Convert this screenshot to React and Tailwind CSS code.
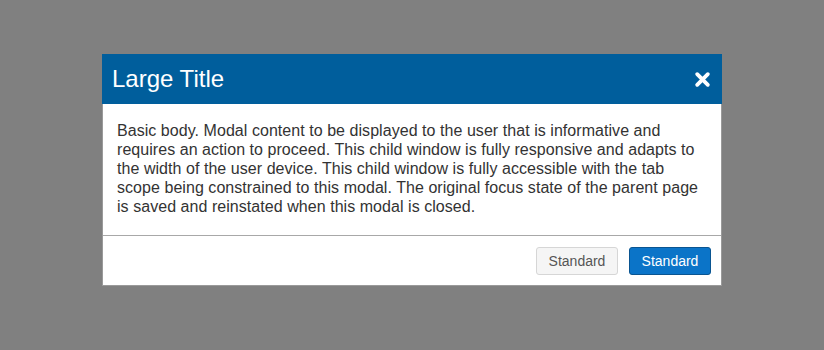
const bodyLines = [
  "Basic body. Modal content to be displayed to the user that is informative and",
  "requires an action to proceed. This child window is fully responsive and adapts to",
  "the width of the user device. This child window is fully accessible with the tab",
  "scope being constrained to this modal. The original focus state of the parent page",
  "is saved and reinstated when this modal is closed.",
];

export default function App() {
  return (
    <div
      className="w-[824px] h-[350px] bg-[#808080] flex justify-center pt-[54px]"
      style={{ fontFamily: '"Liberation Sans", Arial, sans-serif' }}
    >
      {/* Modal */}
      <div className="w-[620px] h-[232px] bg-white border border-[#9a9a9a] flex flex-col">
        {/* Header */}
        <div className="h-[50px] shrink-0 bg-[#005e9c] flex items-center justify-between pl-[10px] pr-[10px] -mx-px -mt-px">
          <h1 className="text-[24px] text-white leading-none">Large Title</h1>
          <button className="text-white w-[20px] h-[20px] flex items-center justify-center">
            <svg width="17" height="17" viewBox="0 0 16 16">
              <path
                d="M3 3 L13 13 M13 3 L3 13"
                stroke="white"
                strokeWidth="3.6"
                strokeLinecap="round"
              />
            </svg>
          </button>
        </div>

        {/* Body */}
        <div className="px-[14px] pt-[17px] pb-[19px] border-b border-[#a8a8a8]">
          <p className="text-[16px] leading-[19px] tracking-[0.05px] text-[#333] whitespace-nowrap">
            {bodyLines.map((line) => (
              <span key={line} className="block">
                {line}
              </span>
            ))}
          </p>
        </div>

        {/* Footer */}
        <div className="flex justify-end gap-[11px] pr-[10px] pt-[11px]">
          <button className="h-[28px] w-[82px] rounded-[3px] border border-[#d6d6d6] bg-[#f5f5f5] text-[14px] text-[#555]">
            Standard
          </button>
          <button className="h-[28px] w-[82px] rounded-[3px] border border-[#0a5591] bg-[#0b74c8] text-[14px] text-white">
            Standard
          </button>
        </div>
      </div>
    </div>
  );
}
